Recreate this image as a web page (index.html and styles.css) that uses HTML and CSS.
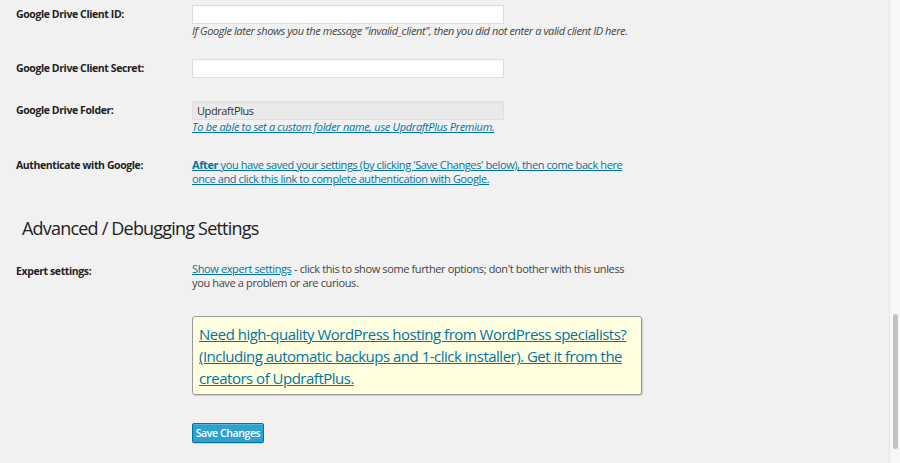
FILE: index.html
```html
<!DOCTYPE html>
<html lang="en">
<head>
<meta charset="utf-8">
<title>UpdraftPlus Settings</title>
<link rel="stylesheet" href="styles.css">
</head>
<body>
<div class="page">
  <main class="content">
    <div class="row row-id">
      <div class="label">Google Drive Client ID:</div>
      <div class="field">
        <input class="text-input" type="text" value="">
        <p class="desc"><em>If Google later shows you the message "invalid_client", then you did not enter a valid client ID here.</em></p>
      </div>
    </div>
    <div class="row row-secret">
      <div class="label">Google Drive Client Secret:</div>
      <div class="field">
        <input class="text-input" type="text" value="">
      </div>
    </div>
    <div class="row row-folder">
      <div class="label">Google Drive Folder:</div>
      <div class="field">
        <input class="text-input readonly" type="text" value="UpdraftPlus" readonly>
        <p class="desc"><a class="link" href="#"><em>To be able to set a custom folder name, use UpdraftPlus Premium.</em></a></p>
      </div>
    </div>
    <div class="row row-auth">
      <div class="label">Authenticate with Google:</div>
      <div class="field">
        <p class="auth"><a class="link" href="#"><strong>After</strong> you have saved your settings (by clicking 'Save Changes' below), then come back here<br>once and click this link to complete authentication with Google.</a></p>
      </div>
    </div>
    <h2 class="section-title">Advanced / Debugging Settings</h2>
    <div class="row row-expert">
      <div class="label">Expert settings:</div>
      <div class="field">
        <p class="expert"><a class="link" href="#">Show expert settings</a> - click this to show some further options; don't bother with this unless<br>you have a problem or are curious.</p>
      </div>
    </div>
    <div class="row row-promo">
      <div class="label"></div>
      <div class="field">
        <div class="promo"><a class="link" href="#">Need high-quality WordPress hosting from WordPress specialists?<br>(Including automatic backups and 1-click installer). Get it from the<br>creators of UpdraftPlus.</a></div>
      </div>
    </div>
    <div class="row row-submit">
      <div class="label"></div>
      <div class="field">
        <button class="button-primary" type="button">Save Changes</button>
      </div>
    </div>
  </main>
  <div class="scrollbar"><div class="thumb"></div></div>
</div>
</body>
</html>
```

FILE: styles.css
```css
html, body {
  margin: 0;
  padding: 0;
  height: 100%;
  overflow: hidden;
}
body {
  background: #f1f1f1;
  font-family: "Open Sans", "Noto Sans", sans-serif;
  color: #444;
  font-size: 11px;
  letter-spacing: -0.4px;
}
.page {
  display: flex;
  height: 463px;
}
.content {
  flex: 1;
  padding: 5px 0 0 16px;
}
.row {
  display: flex;
}
.label {
  width: 176px;
  flex: none;
  font-weight: 700;
  color: #222;
  font-size: 10.5px;
  letter-spacing: -0.4px;
  line-height: 14px;
  padding-top: 2px;
  white-space: nowrap;
}
.field {
  display: flex;
  flex-direction: column;
  align-items: flex-start;
  white-space: nowrap;
}
.text-input {
  box-sizing: border-box;
  width: 312px;
  height: 19px;
  margin: 0;
  padding: 0 4px;
  border: 1px solid #ddd;
  background: #fff;
  box-shadow: inset 0 1px 2px rgba(0,0,0,0.04);
  font-family: "Open Sans", "Noto Sans", sans-serif;
  font-size: 11px;
  letter-spacing: -0.4px;
  color: #333;
  outline: none;
}
.text-input.readonly {
  background: #eaeaea;
  border-color: #e0e0e0;
}
.desc {
  margin: 0;
  line-height: 14px;
  font-size: 11px;
}
.row-folder .desc {
  letter-spacing: -0.3px;
}
.link {
  color: #0074a2;
  text-decoration: underline;
}
.row-secret { margin-top: 21px; }
.row-folder { margin-top: 23px; }
.row-auth { margin-top: 24px; }
.auth {
  margin: 0;
  line-height: 14px;
}
.row-auth .label { padding-top: 0; }
.section-title {
  margin: 30px 0 0 6px;
  font-size: 18px;
  font-weight: 400;
  letter-spacing: -0.8px;
  line-height: 24px;
  color: #222;
}
.row-expert { margin-top: 22px; }
.row-expert .label { padding-top: 2px; }
.expert {
  margin: 0;
  line-height: 14px;
  letter-spacing: -0.37px;
}
.row-promo { margin-top: 26px; }
.promo {
  box-sizing: border-box;
  width: 450px;
  padding: 6px 6px 5px 6px;
  background: #ffffe0;
  border: 1px solid #999;
  border-radius: 3px;
  box-shadow: 1px 1px 1px rgba(0,0,0,0.15);
  font-size: 15px;
  letter-spacing: -0.5px;
  line-height: 22px;
}
.row-submit { margin-top: 28px; }
.button-primary {
  box-sizing: border-box;
  width: 72px;
  height: 20px;
  margin: 0;
  padding: 0;
  background: #2ea2cc;
  border: 1px solid #0074a2;
  border-radius: 2px;
  box-shadow: inset 0 1px 0 rgba(120,200,230,0.5), 0 1px 0 rgba(0,0,0,0.15);
  color: #fff;
  font-family: "Open Sans", "Noto Sans", sans-serif;
  font-size: 10.5px;
  font-weight: 600;
  letter-spacing: -0.4px;
  line-height: 18px;
}
.scrollbar {
  width: 10px;
  flex: none;
  background: #f7f7f7;
  border-left: 1px solid #e6e6e6;
  display: flex;
  justify-content: center;
}
.thumb {
  width: 5px;
  height: 135px;
  margin-top: 314px;
  background: #c2c2c2;
  border-radius: 3px;
}
```
